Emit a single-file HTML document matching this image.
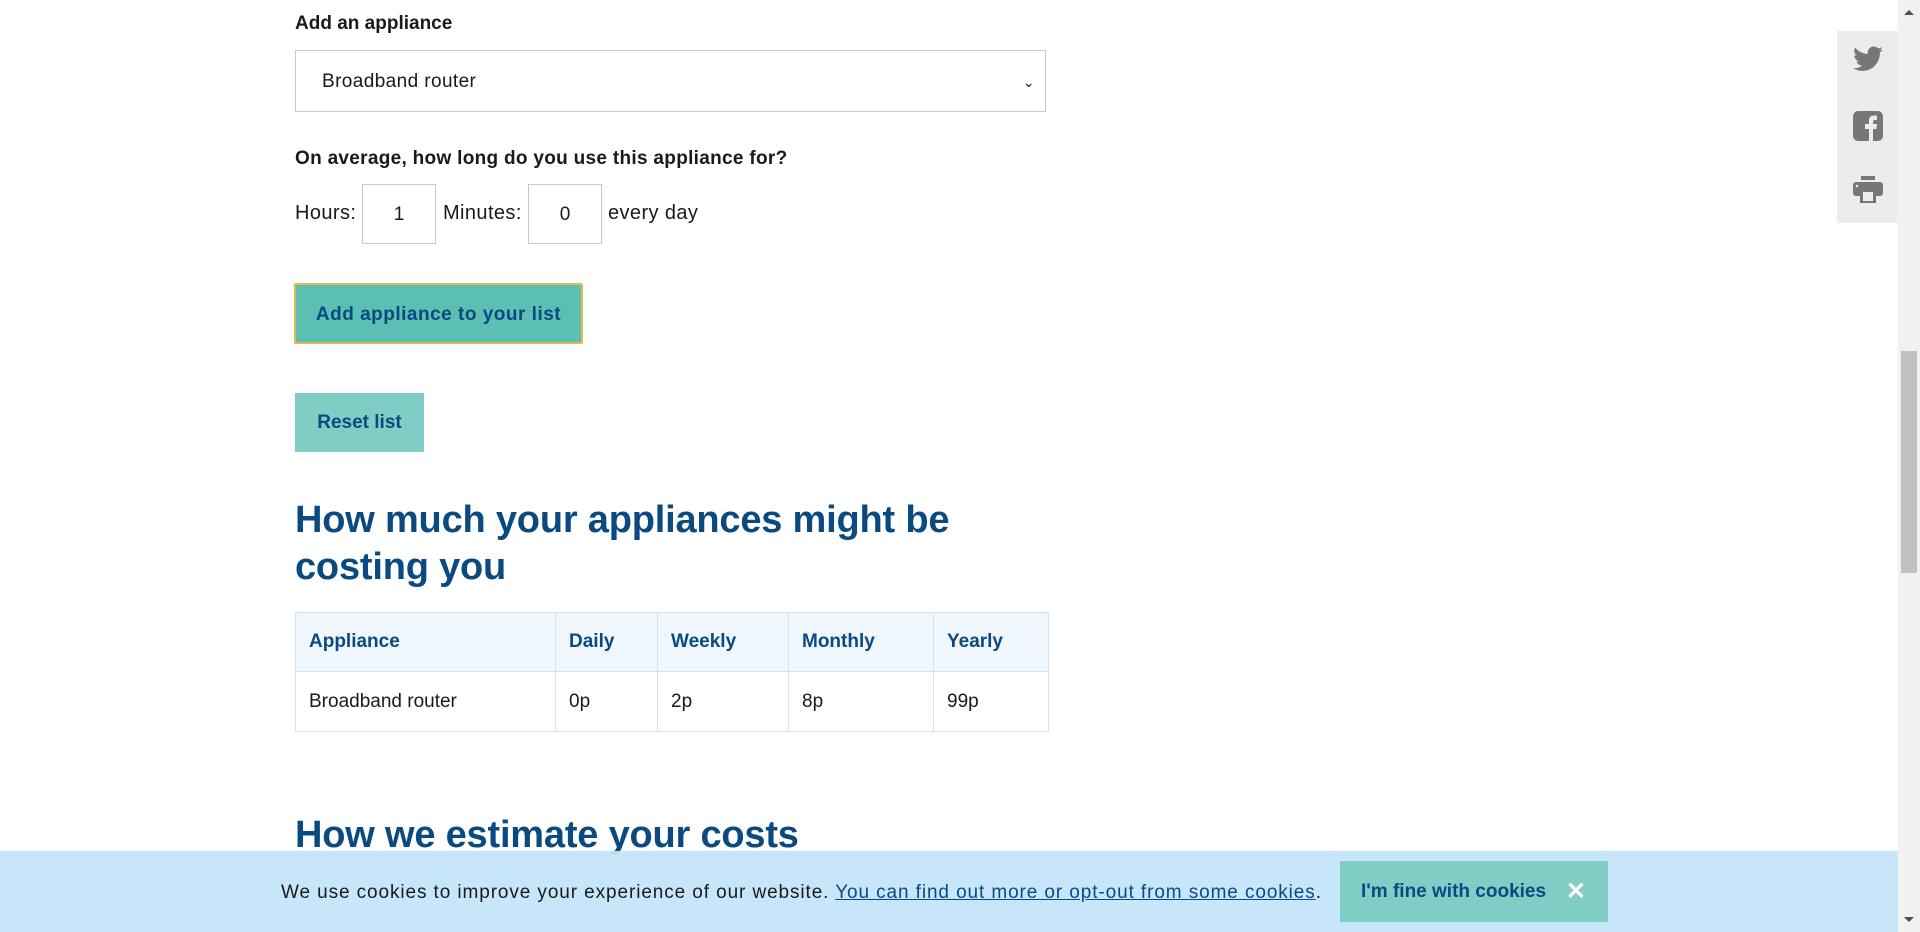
<!DOCTYPE html>
<html><head><style>
body{margin:0;width:1920px;height:932px;overflow:hidden;background:#fff;font-family:"Liberation Sans",sans-serif;color:#1a1a1a;position:relative}
.a{position:absolute}
label.b{font-weight:bold;font-size:19px}
.sel{left:295px;top:50px;width:751px;height:62px;border:1px solid #c8c8c8;font-size:19px;line-height:62px;box-sizing:border-box;padding-left:26px;letter-spacing:0.4px}
.inp{height:60px;border:1px solid #c8c8c8;box-sizing:border-box;text-align:center;line-height:60px;font-size:19px;top:184px}
.t{font-size:20px;letter-spacing:0.4px}
h2{margin:0;color:#0b4a80;font-size:38px;line-height:47px;font-weight:bold;letter-spacing:-0.2px}
table{border-collapse:collapse;font-size:19px}
td,th{border:1px solid #cfe3f0;text-align:left;padding:0 13px}
th{background:#eff7fd;color:#0b4a80;height:58px}
td{height:59px}
</style></head><body>
<label class="a b" style="left:295px;top:13px">Add an appliance</label>
<div class="a sel">Broadband router<span style="position:absolute;right:10px;font-size:14px">&#8964;</span></div>
<div class="a b" style="left:295px;top:148px;font-weight:bold;font-size:19px;letter-spacing:0.3px">On average, how long do you use this appliance for?</div>
<div class="a t" style="left:295px;top:202px">Hours:</div>
<div class="a inp" style="left:362px;width:74px">1</div>
<div class="a t" style="left:443px;top:202px">Minutes:</div>
<div class="a inp" style="left:528px;width:74px">0</div>
<div class="a t" style="left:608px;top:202px">every day</div>
<div class="a" style="left:294px;top:283px;width:289px;height:61px;box-sizing:border-box;background:#5cbfb4;border:2px solid #e8b74a;border-radius:2px;color:#0b4a80;font-size:19px;font-weight:bold;line-height:59px;text-align:center;letter-spacing:0.5px">Add appliance to your list</div>
<div class="a" style="left:295px;top:393px;width:129px;height:59px;background:#7fcdc5;color:#0b4a80;font-size:19px;font-weight:bold;line-height:60px;text-align:center">Reset list</div>
<h2 class="a" style="left:295px;top:497px;width:760px">How much your appliances might be costing you</h2>
<table class="a" style="left:295px;top:612px;width:754px">
<tr><th style="width:233px">Appliance</th><th style="width:75px">Daily</th><th style="width:104px">Weekly</th><th style="width:118px">Monthly</th><th>Yearly</th></tr>
<tr><td>Broadband router</td><td>0p</td><td>2p</td><td>8p</td><td>99p</td></tr>
</table>
<h2 class="a" style="left:295px;top:812px">How we estimate your costs</h2>
<div class="a" style="left:0;top:851px;width:1898px;height:81px;background:rgba(196,228,250,0.94)"></div>
<div class="a" style="left:281px;top:882px;font-size:19px;color:#1a1a1a;letter-spacing:0.9px">We use cookies to improve your experience of our website. <span style="color:#0b4a80;text-decoration:underline">You can find out more or opt-out from some cookies</span>.</div>
<div class="a" style="left:1340px;top:861px;width:268px;height:61px;background:#7fcdc5;color:#0b4a80;font-weight:bold;font-size:19px;line-height:61px;padding-left:21px;box-sizing:border-box">I'm fine with cookies<span style="position:absolute;right:22px;color:#fff;font-size:24px">&#10005;</span></div>
<div class="a" style="left:1837px;top:31px;width:61px;height:192px;background:#ececec">
<svg class="a" style="left:16px;top:15px" width="30" height="26" viewBox="0 0 24 20"><path fill="#777" d="M24 2.4a10 10 0 0 1-2.8.8A5 5 0 0 0 23.3.4a10 10 0 0 1-3.1 1.2A4.9 4.9 0 0 0 11.8 6 14 14 0 0 1 1.7.9a4.9 4.9 0 0 0 1.5 6.6A4.9 4.9 0 0 1 1 6.9 4.9 4.9 0 0 0 4.9 11.8a5 5 0 0 1-2.2.1 4.9 4.9 0 0 0 4.6 3.4A9.9 9.9 0 0 1 0 17.3 14 14 0 0 0 7.5 19.5c9.1 0 14-7.5 14-14v-.6A10 10 0 0 0 24 2.4z"/></svg>
<svg class="a" style="left:16px;top:80px" width="30" height="30" viewBox="0 0 30 30"><rect width="30" height="30" rx="5" fill="#777"/><path fill="#ececec" d="M16 30V18h-4v-5h4V9.5C16 6 18 4.5 21 4.5c1.4 0 2.5.1 3 .2V9h-2c-1.5 0-2 .7-2 2v2h4l-.5 5H20v12z"/></svg>
<svg class="a" style="left:16px;top:145px" width="30" height="28" viewBox="0 0 30 28"><rect x="8" y="0" width="14" height="4" fill="#777"/><rect x="0" y="6" width="30" height="14" rx="3" fill="#777"/><circle cx="4" cy="10" r="1.3" fill="#ececec"/><rect x="7" y="14" width="16" height="13" fill="#777"/><rect x="10" y="16" width="10" height="9" fill="#ececec"/></svg>
</div>
<div class="a" style="left:1898px;top:0;width:22px;height:932px;background:#f1f1f1"></div>
<div class="a" style="left:1901px;top:351px;width:16px;height:222px;background:#c1c1c1"></div>
<div class="a" style="left:1904px;top:10px;border:5px solid transparent;border-bottom:5px solid #505050;border-top:0"></div>
<div class="a" style="left:1904px;top:917px;border:5px solid transparent;border-top:5px solid #505050;border-bottom:0"></div>
</body></html>
